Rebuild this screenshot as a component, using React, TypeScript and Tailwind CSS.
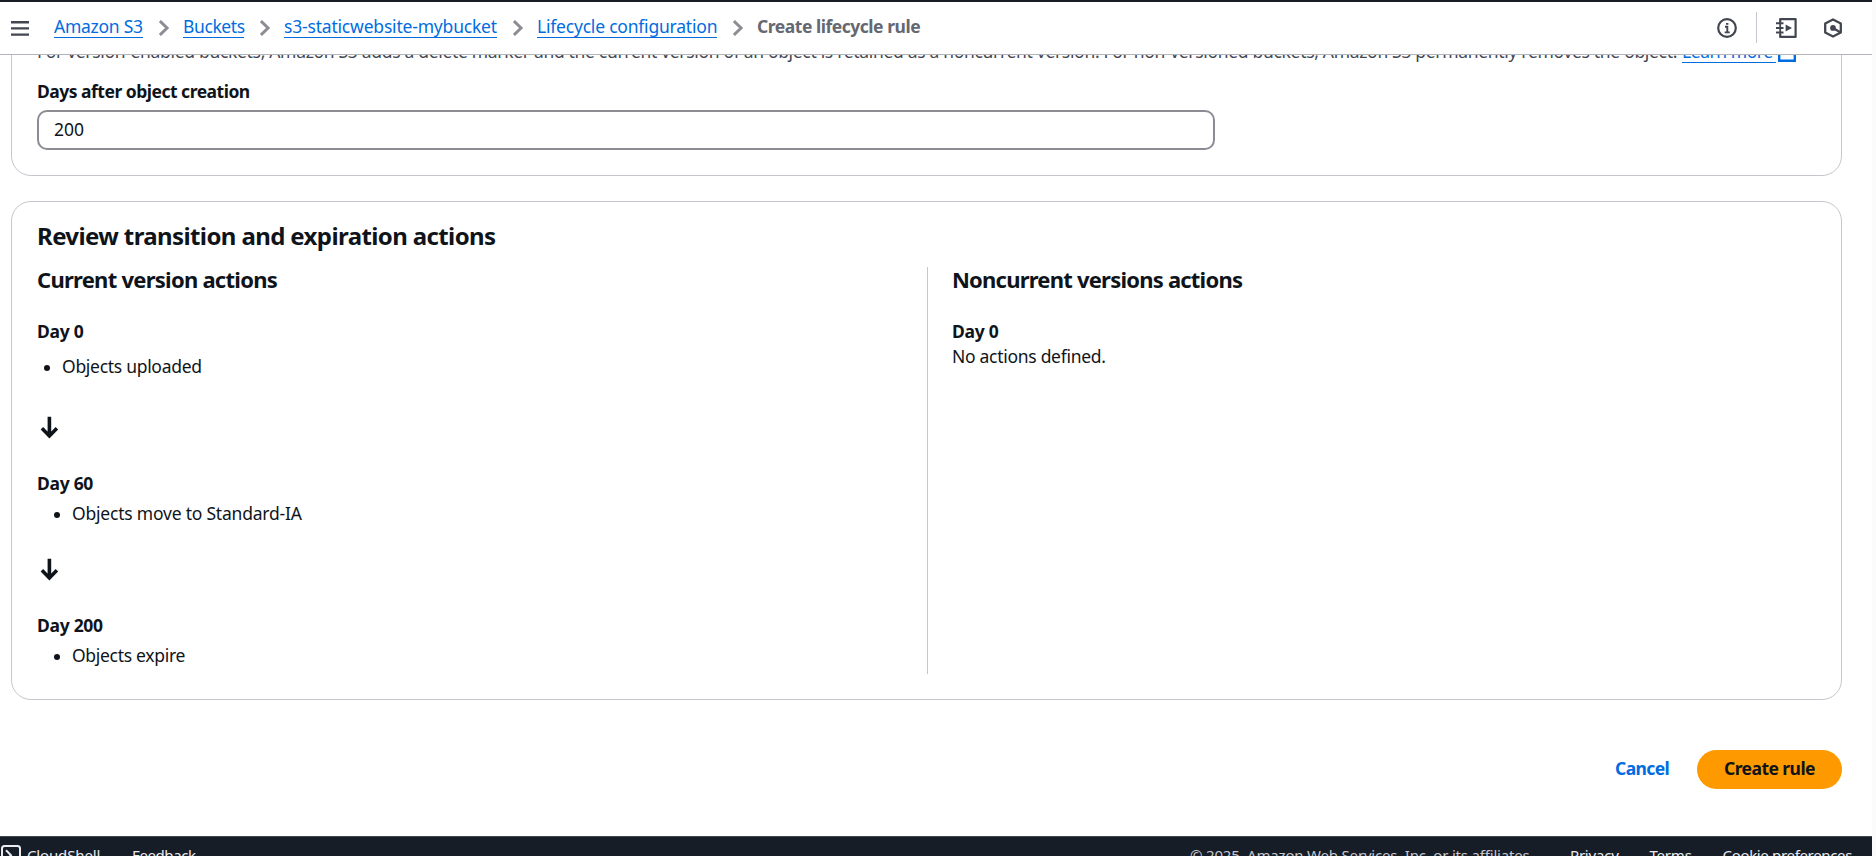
import React from "react";

function Chevron() {
  return (
    <svg className="ml-[16px] mr-[13px] mt-[6px] h-[16px] w-[11px] shrink-0" viewBox="0 0 11 16" fill="none" stroke="#8c8c94" strokeWidth="2.9">
      <path d="M.9 1 8.1 8l-7.2 7" />
    </svg>
  );
}

function Crumb({ className, children }: { className: string; children: React.ReactNode }) {
  return (
    <a href="#" className={`block h-6 shrink-0 border-b border-[#006ce0] text-[#006ce0] ${className}`}>
      {children}
    </a>
  );
}

function DownArrow({ className }: { className: string }) {
  return (
    <svg className={`ml-[3px] block h-[23px] w-[19px] ${className}`} viewBox="0 0 19 23" fill="none" stroke="#0f141a" strokeWidth="3.6">
      <path d="M9.4 .7v19M1.9 12.3l7.5 7.6 7.5-7.6" />
    </svg>
  );
}

function Bullet({ className, children }: { className: string; children: React.ReactNode }) {
  return (
    <li className={`flex items-center ${className}`}>
      <span className="mt-[3px] mr-[12px] size-[6px] shrink-0 rounded-full bg-[#0f141a]" />
      {children}
    </li>
  );
}

export default function App() {
  return (
    <div className="flex h-[856px] w-full overflow-hidden whitespace-nowrap bg-[#fbfbfb] font-['Noto_Sans',sans-serif] text-[17.5px] leading-[25px] text-[#0f141a]">
      <div className="flex w-[1872px] shrink-0 flex-col bg-white">
        <div className="h-[2px] shrink-0 bg-[#161d26]" />

        <header className="flex h-[53px] shrink-0 border-b border-[#b4b4bb] pt-3">
          <svg className="ml-[11px] mt-[6px] h-[18px] w-[18px] shrink-0" viewBox="0 0 18 18" stroke="#424650" strokeWidth="2.4">
            <path d="M0 2.2h18M0 8.4h18M0 14.6h18" />
          </svg>
          <nav className="ml-[25px] flex">
            <Crumb className="w-[89px] tracking-[-0.27px]">Amazon S3</Crumb>
            <Chevron />
            <Crumb className="w-[61px] tracking-[-0.4px]">Buckets</Crumb>
            <Chevron />
            <Crumb className="w-[213px] tracking-[-0.19px]">s3-staticwebsite-mybucket</Crumb>
            <Chevron />
            <Crumb className="w-[180px] tracking-[-0.21px]">Lifecycle configuration</Crumb>
            <Chevron />
            <span className="font-bold tracking-[-0.47px] text-[#656871]">Create lifecycle rule</span>
          </nav>
          <div className="ml-auto flex pr-[30px]">
            <svg className="mt-1 size-5" viewBox="0 0 20 20" fill="none" stroke="#424650" strokeWidth="2.2">
              <circle cx="10" cy="10" r="8.8" />
              <path d="M8 8.8h2.3v5.7M7.7 14.4h5M9 5.9h2.4" strokeWidth="1.9" />
            </svg>
            <div className="ml-[19px] -mt-[2px] h-[31px] w-px bg-[#c6c6cd]" />
            <svg className="ml-[19px] mt-1 h-5 w-[21px]" viewBox="0 0 21 20" fill="none" stroke="#424650" strokeWidth="2.2">
              <path d="M4.2 4V1.1h15.4v17.8H4.2V16" strokeLinejoin="round" />
              <path d="M4.2 4v12" strokeWidth="1.8" />
              <path d="M0 5.2h7.5M0 9.9h7.5M0 14.6h7.5" strokeWidth="2" />
              <path d="M9.6 6.6v7l6.4-3.5z" fill="#424650" stroke="none" />
            </svg>
            <svg className="ml-[27px] mt-1 h-5 w-[18px]" viewBox="0 0 18 20" fill="none" stroke="#424650" strokeWidth="2.3">
              <path d="M9 1.4 16.8 5.5v9L9 18.6 1.2 14.5v-9z" strokeLinejoin="round" />
              <circle cx="9" cy="9.9" r="2.9" fill="#424650" stroke="none" />
              <path d="m9 10 7.2 4.2" />
            </svg>
          </div>
        </header>

        <main className="flex min-h-0 flex-1 flex-col overflow-hidden pl-[11px] pr-[30px]">
          <section className="-mt-10 flex h-[161px] shrink-0 flex-col rounded-[20px] border border-[#c6c6cd] px-[25px] pt-[23px]">
            <p className="flex h-[25px] text-[#424650]">
              <span className="w-[1645px] tracking-[-0.318px]">
                For version-enabled buckets, Amazon S3 adds a delete marker and the current version of an object is retained as a
                noncurrent version. For non-versioned buckets, Amazon S3 permanently removes the object.
              </span>
              <Crumb className="w-[94px] tracking-[-0.45px]">Learn more</Crumb>
              <svg className="ml-[2px] mt-[5px] h-[18px] w-[18px]" viewBox="0 0 18 18" fill="none" stroke="#006ce0" strokeWidth="2.4">
                <path d="M8 1.2H1.2v15.6h15.6V10M11 1.2h5.8V7M16.8 1.2 8 10" />
              </svg>
            </p>
            <label className="mt-[15px] block font-bold tracking-[-0.5px]">Days after object creation</label>
            <div className="mt-[6px] h-10 w-[1178px] shrink-0 rounded-[10px] border-2 border-[#8c8c94] pl-[15px] pt-[5px]">200</div>
          </section>

          <section className="mt-[25px] h-[499px] shrink-0 rounded-[20px] border border-[#c6c6cd] px-[25px] pt-[19px]">
            <h2 className="text-[24px] font-bold leading-[30px] tracking-[-0.61px]">Review transition and expiration actions</h2>
            <div className="mt-4 grid h-[407px] grid-cols-[890px_1fr]">
              <div>
                <h3 className="text-[22px] font-bold tracking-[-0.74px]">Current version actions</h3>
                <h4 className="mt-[27px] font-bold tracking-[-0.3px]">Day 0</h4>
                <ul className="mt-[10px]">
                  <Bullet className="pl-[7px] tracking-[-0.29px]">Objects uploaded</Bullet>
                </ul>
                <DownArrow className="mt-[37px]" />
                <h4 className="mt-8 font-bold tracking-[-0.3px]">Day 60</h4>
                <ul className="mt-[5px]">
                  <Bullet className="pl-[17px] tracking-[-0.21px]">Objects move to Standard-IA</Bullet>
                </ul>
                <DownArrow className="mt-8" />
                <h4 className="mt-8 font-bold tracking-[-0.3px]">Day 200</h4>
                <ul className="mt-[5px]">
                  <Bullet className="pl-[17px] tracking-[-0.3px]">Objects expire</Bullet>
                </ul>
              </div>
              <div className="border-l border-[#c6c6cd] pl-6">
                <h3 className="text-[22px] font-bold tracking-[-0.78px]">Noncurrent versions actions</h3>
                <h4 className="mt-[27px] font-bold tracking-[-0.3px]">Day 0</h4>
                <p className="tracking-[-0.29px]">No actions defined.</p>
              </div>
            </div>
          </section>

          <div className="mt-[50px] flex h-[39px] shrink-0 justify-end">
            <button className="mr-[27px] w-[55px] pb-[2px] text-left font-bold tracking-[-0.6px] text-[#006ce0]">Cancel</button>
            <button className="h-[39px] w-[145px] rounded-full bg-[#ff9900] pb-[2px] font-bold tracking-[-0.55px]">Create rule</button>
          </div>
        </main>

        <footer className="flex h-5 shrink-0 overflow-hidden border-t border-[#424650] bg-[#161d26] pt-2 text-[15px] leading-[20px] text-[#ebebf0]">
          <svg className="ml-px size-5 shrink-0" viewBox="0 0 20 20" fill="none" stroke="#ebebf0" strokeWidth="2">
            <rect x="1" y="1" width="18" height="18" rx="2.5" />
            <path d="m5 5.2 5 5-5 5M11 15h5" />
          </svg>
          <span className="ml-[6px] w-[105px] tracking-[-0.15px]">CloudShell</span>
          <span className="tracking-[-0.4px]">Feedback</span>
          <span className="ml-auto w-[380px] tracking-[-0.19px] text-[#c6c6cd]">© 2025, Amazon Web Services, Inc. or its affiliates.</span>
          <span className="w-[79.5px] tracking-[-0.2px]">Privacy</span>
          <span className="w-[73px] tracking-[-0.2px]">Terms</span>
          <span className="w-[149.5px] tracking-[-0.33px]">Cookie preferences</span>
        </footer>
      </div>
    </div>
  );
}
